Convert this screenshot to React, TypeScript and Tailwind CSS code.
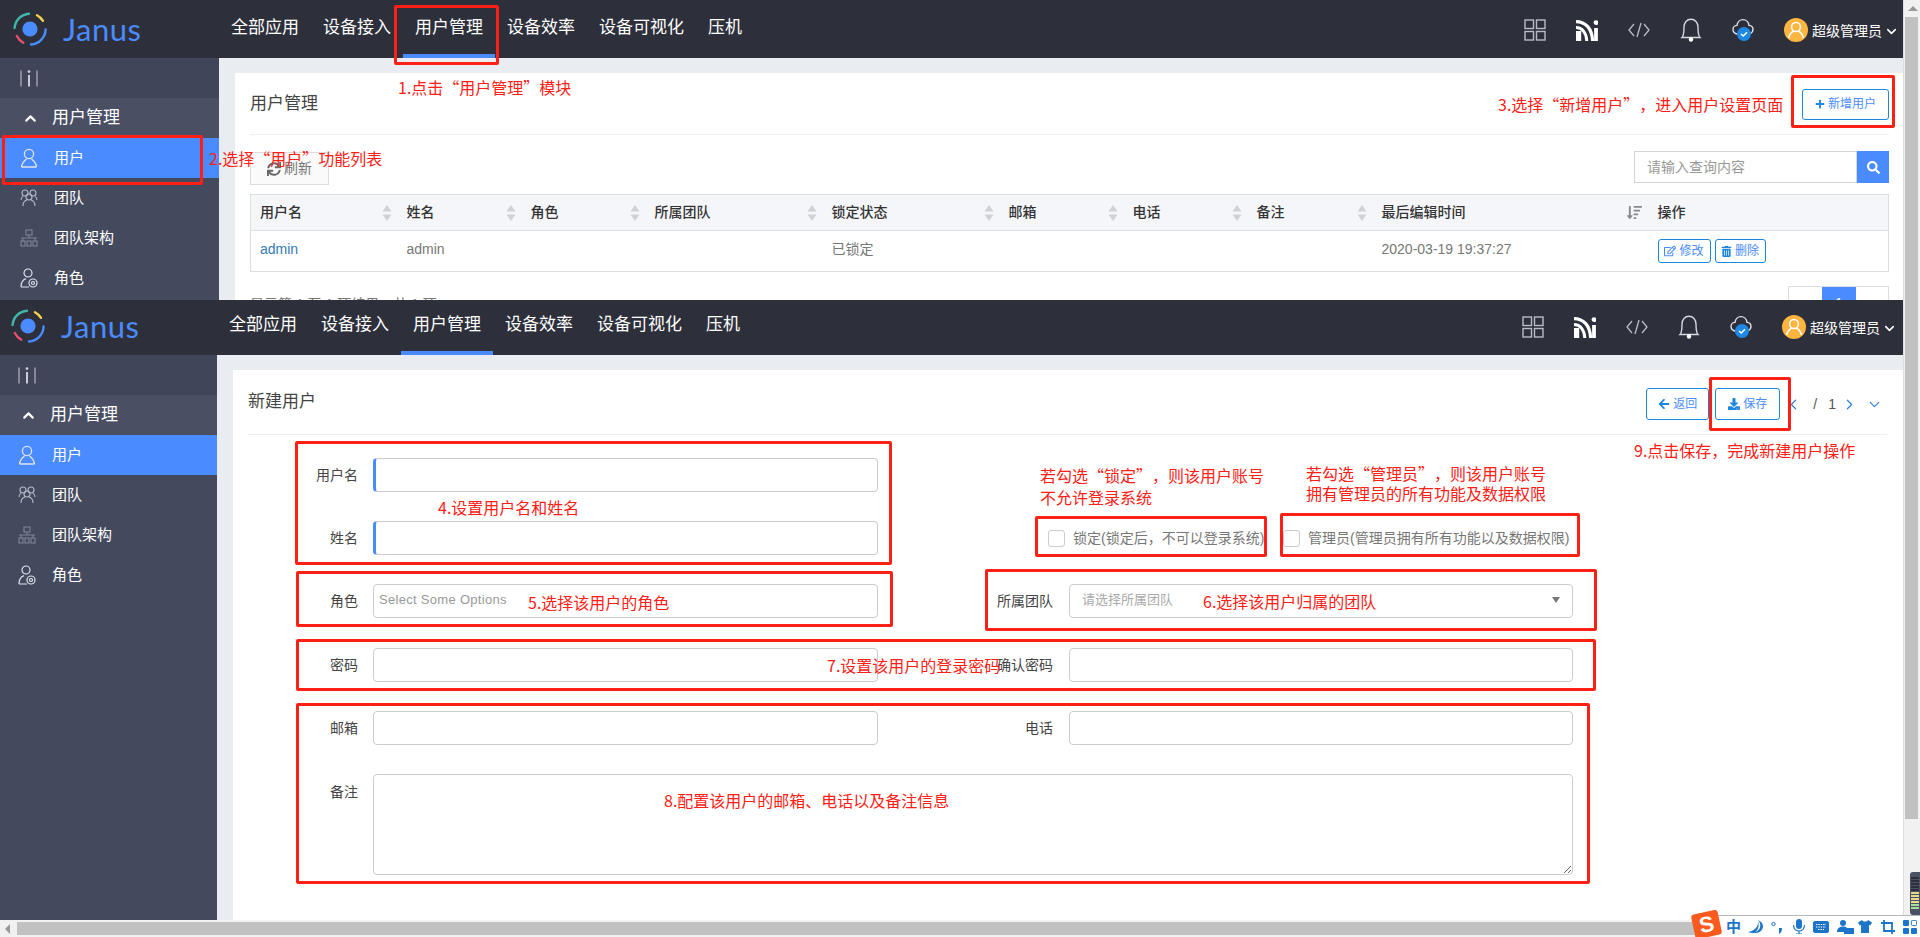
import { ChevronDown, ChevronLeft, ChevronRight, ChevronUp } from "lucide-react"
import { FaArrowLeft, FaDownload, FaPlus, FaRegEdit, FaSearch, FaSortAmountDown, FaSync, FaTrashAlt } from "react-icons/fa"

const navItems = ["全部应用", "设备接入", "用户管理", "设备效率", "设备可视化", "压机"]

function Logo() {
  return (
    <svg viewBox="0 0 36 36" className="w-[36px] h-[36px] ml-[12px] shrink-0" fill="none" strokeWidth="2.4" strokeLinecap="round">
      <circle cx="18" cy="18" r="7.6" fill="#4a8cff" />
      <path d="M2.6 17 A15.4 15.4 0 0 1 17 2.7" stroke="#3fb8a9" />
      <path d="M25 4.2 A15.5 15.5 0 0 1 31 9.8" stroke="#f5d34a" />
      <path d="M33.6 18.5 A15.6 15.6 0 0 1 19 33.5" stroke="#4a8cff" />
      <path d="M4.8 25 A15.5 15.5 0 0 0 11.3 31.7" stroke="#e8506e" />
    </svg>
  )
}

function TopNav({ wide }: { wide?: boolean }) {
  return (
    <header className={`flex h-[58px] shrink-0 bg-[#2d2f3b] text-white ${wide ? "w-[1905px] pr-[6px]" : "w-full pr-[4px]"}`}>
      <div className="flex w-[219px] shrink-0 items-center">
        <Logo />
        <span className="ml-[15px] text-[31px] leading-none text-[#4a8cff] font-['Lato','Liberation_Sans',sans-serif] tracking-[0.5px]">Janus</span>
      </div>
      <nav className="flex">
        {navItems.map((item) => (
          <a
            key={item}
            className={`flex items-center px-[12px] pb-[3px] text-[17px] ${item === "用户管理" ? "box-content border-b-4 border-[#4a8cff] pt-[4px]" : ""}`}
          >
            {item}
          </a>
        ))}
      </nav>
      <div className="ml-auto flex items-center pt-[1px]">
        <div className="flex items-center gap-[30px]">
          <svg viewBox="0 0 22 22" className="w-[22px] h-[22px]" fill="none" stroke="#b9bcc6" strokeWidth="1.4">
            <rect x="1" y="1" width="8.5" height="8.5" />
            <rect x="12.5" y="1" width="8.5" height="8.5" />
            <rect x="1" y="12.5" width="8.5" height="8.5" />
            <rect x="12.5" y="12.5" width="8.5" height="8.5" />
          </svg>
          <svg viewBox="0 0 22 22" className="w-[22px] h-[22px]" fill="none" stroke="#fff">
            <path d="M0 2.6 C9.6 2.6 16.2 9.6 16.6 22" strokeWidth="3.2" />
            <path d="M0 8.6 C6 8.6 10.4 13.6 10.8 22" strokeWidth="3" />
            <path d="M2.6 12 V22" strokeWidth="5.2" />
            <path d="M20 9 V22" strokeWidth="3.8" />
            <circle cx="20" cy="3.6" r="2.4" fill="#fff" stroke="none" />
          </svg>
          <svg viewBox="0 0 22 16" className="w-[22px] h-[16px]" fill="none" stroke="#b9bcc6" strokeWidth="1.3">
            <path d="M6 2 L1 8 L6 14" />
            <path d="M16 2 L21 8 L16 14" />
            <path d="M13 1 L9 15" />
          </svg>
          <svg viewBox="0 0 22 24" className="w-[22px] h-[24px]" fill="none" stroke="#d6d8de" strokeWidth="1.4">
            <path d="M2 19.5 C3.5 18 4 16 4 9 C4 4.6 7 1.2 11 1.2 C15 1.2 18 4.6 18 9 C18 16 18.5 18 20 19.5 Z" />
            <circle cx="11" cy="21.5" r="2.2" fill="#fff" stroke="none" />
          </svg>
          <svg viewBox="0 0 22 24" className="w-[22px] h-[24px]" fill="none">
            <path d="M6 16 C3 16 1 14 1 11.5 C1 9 3 7.4 5 7.4 C5.4 4 8 1.6 11 1.6 C14 1.6 16.6 4 17 7.4 C19.4 7.6 21 9.4 21 11.5 C21 13.4 20 14.8 18 15.6" stroke="#dfe1e6" strokeWidth="1.4" />
            <circle cx="12" cy="16" r="7" fill="#1e88e5" />
            <path d="M9 16 L11.2 18 L15 14.2" stroke="#fff" strokeWidth="1.5" />
          </svg>
        </div>
        <svg viewBox="0 0 24 24" className="ml-[30px] w-[24px] h-[24px]" fill="none" stroke="#fff" strokeWidth="1.5">
          <circle cx="12" cy="12" r="12" fill="#fdb53f" stroke="none" />
          <circle cx="12" cy="9" r="4.4" />
          <path d="M4.6 20 C5.4 16 8 14 9.6 13 M19.4 20 C18.6 16 16 14 14.4 13" />
        </svg>
        <span className="ml-[4px] pt-[4px] text-[14px]">超级管理员</span>
        <ChevronDown className="ml-[2px] mt-[4px] w-[15px] h-[15px]" strokeWidth={2.5} />
      </div>
    </header>
  )
}

function SideIcon({ name }: { name: string }) {
  if (name === "用户") {
    return (
      <svg viewBox="0 0 18 20" className="w-[18px] h-[20px]" fill="none" stroke="#dfe3ee" strokeWidth="1.3">
        <circle cx="9" cy="6" r="4.6" />
        <path d="M1.5 19 C2 14.5 4.6 12.4 6.5 11 M16.5 19 C16 14.5 13.4 12.4 11.5 11 M1.5 19 H16.5" />
      </svg>
    )
  }
  if (name === "团队") {
    return (
      <svg viewBox="0 0 18 18" className="w-[18px] h-[18px]" fill="none" stroke="#b5bac9" strokeWidth="1.1">
        <circle cx="5" cy="4" r="3" />
        <circle cx="13" cy="4" r="3" />
        <circle cx="9" cy="8" r="3" />
        <path d="M3 17 C3 13 5 11.5 7 11 M15 17 C15 13 13 11.5 11 11 M1 11 C1 9 2 8 3 7.4 M17 11 C17 9 16 8 15 7.4" />
      </svg>
    )
  }
  if (name === "团队架构") {
    return (
      <svg viewBox="0 0 18 18" className="w-[18px] h-[18px]" fill="none" stroke="#7f8496" strokeWidth="1.1">
        <rect x="6" y="1" width="6" height="5" />
        <rect x="1" y="12" width="4" height="5" />
        <rect x="7" y="12" width="4" height="5" />
        <rect x="13" y="12" width="4" height="5" />
        <path d="M9 6 V9 M1 9 H17 M3 9 V12 M15 9 V12" />
      </svg>
    )
  }
  return (
    <svg viewBox="0 0 18 20" className="w-[18px] h-[20px]" fill="none" stroke="#dfe3ee" strokeWidth="1.2">
      <circle cx="8" cy="5" r="4" />
      <path d="M1 19 C1 14 3 11.6 6 10.6 M1 19 H9" />
      <circle cx="13" cy="15" r="4" />
      <circle cx="13" cy="15" r="1.5" />
    </svg>
  )
}

function Sidebar() {
  return (
    <aside className="w-[219px] shrink-0 bg-[#444a5e] text-white text-[15px]">
      <div className="flex h-[40px] items-center pl-[20px] bg-[#40455a]">
        <svg viewBox="0 0 18 17" className="w-[18px] h-[17px]" fill="none" stroke="#c8cbd6" strokeWidth="1">
          <path d="M1 0.5 V16.5 M17 0.5 V16.5" />
          <path d="M9 5 V16.5" strokeWidth="2" />
          <circle cx="9" cy="1.6" r="1.4" fill="#c8cbd6" stroke="none" />
        </svg>
      </div>
      <div className="flex h-[40px] items-center pl-[22px] bg-[#4a4f64] text-[17px]">
        <ChevronUp className="w-[17px] h-[17px]" strokeWidth={3} />
        <span className="ml-[13px]">用户管理</span>
      </div>
      {["用户", "团队", "团队架构", "角色"].map((name) => (
        <div key={name} className={`flex h-[40px] items-center pl-[20px] ${name === "用户" ? "bg-[#4a8cff]" : ""}`}>
          <span className="flex w-[18px] justify-center">
            <SideIcon name={name} />
          </span>
          <span className="ml-[16px]">{name}</span>
        </div>
      ))}
    </aside>
  )
}

function SortIcon() {
  return (
    <svg viewBox="0 0 10 16" className="absolute right-[6px] top-[10px] w-[10px] h-[16px]" fill="#cfd1d6">
      <path d="M5 0 L9.5 6.5 H0.5 Z" />
      <path d="M5 16 L9.5 9.5 H0.5 Z" />
    </svg>
  )
}

const columns = ["用户名", "姓名", "角色", "所属团队", "锁定状态", "邮箱", "电话", "备注"]

function UserList() {
  return (
    <div className="h-[400px] bg-white pl-[15px] pr-[14px]">
      <div className="flex h-[62px] items-center justify-between border-b border-[#eceef2] pt-[1px]">
        <h2 className="text-[17px] text-[#444]">用户管理</h2>
        <button className="flex h-[31px] w-[87px] items-center justify-center gap-[3px] rounded-[3px] border border-[#1c86e0] text-[12px] text-[#4a8cff]">
          <FaPlus className="w-[10px] h-[10px] text-[#1c86e0]" />
          新增用户
        </button>
      </div>
      <div className="mt-[16px] flex items-start justify-between">
        <button className="mt-[1px] flex h-[33px] w-[79px] items-center justify-center gap-[3px] border border-[#ddd] bg-[#fafafa] text-[14px] text-[#777]">
          <FaSync className="w-[14px] h-[14px] text-[#666]" />
          刷新
        </button>
        <div className="flex h-[32px] w-[255px]">
          <input readOnly placeholder="请输入查询内容" className="min-w-0 flex-1 border border-[#d4d4d4] pl-[12px] text-[14px] placeholder:text-[#999]" />
          <span className="flex w-[32px] items-center justify-center bg-[#4a8cff] text-white">
            <FaSearch className="w-[13px] h-[13px]" />
          </span>
        </div>
      </div>
      <table className="mt-[9px] w-full table-fixed border border-[#dcdee3] text-[14px]">
        <colgroup>
          <col className="w-[147px]" />
          <col className="w-[124px]" />
          <col className="w-[124px]" />
          <col className="w-[177px]" />
          <col className="w-[177px]" />
          <col className="w-[124px]" />
          <col className="w-[124px]" />
          <col className="w-[125px]" />
          <col className="w-[276px]" />
          <col />
        </colgroup>
        <thead>
          <tr className="h-[36px] bg-[#f5f6fa] text-left text-[#333]">
            {columns.map((col) => (
              <th key={col} className="relative pl-[9px] font-medium">
                {col}
                <SortIcon />
              </th>
            ))}
            <th className="relative pl-[9px] font-medium">
              最后编辑时间
              <FaSortAmountDown className="absolute right-[7px] top-[10px] w-[15px] h-[15px] text-[#888]" />
            </th>
            <th className="pl-[9px] font-medium">操作</th>
          </tr>
        </thead>
        <tbody className="text-[#777]">
          <tr className="h-[41px] border-t border-[#dcdee3]">
            <td className="pl-[9px] pb-[3px] text-[#337ab7]">admin</td>
            <td className="pl-[9px] pb-[3px]">admin</td>
            <td />
            <td />
            <td className="pl-[9px] pb-[3px]">已锁定</td>
            <td />
            <td />
            <td />
            <td className="pl-[9px] pb-[3px]">2020-03-19 19:37:27</td>
            <td className="pl-[9px]">
              <div className="flex gap-[4px]">
                <button className="flex h-[24px] w-[53px] items-center justify-center gap-[3px] rounded-[3px] border border-[#1c86e0] text-[12px] text-[#4a8cff]">
                  <FaRegEdit className="w-[12px] h-[12px]" />
                  修改
                </button>
                <button className="flex h-[24px] w-[51px] items-center justify-center gap-[3px] rounded-[3px] border border-[#1c86e0] text-[12px] text-[#4a8cff]">
                  <FaTrashAlt className="w-[11px] h-[11px] text-[#1c86e0]" />
                  删除
                </button>
              </div>
            </td>
          </tr>
        </tbody>
      </table>
      <div className="mt-[14px] flex items-start justify-between text-[14px] text-[#777]">
        <span className="pt-[8px]">显示第 1 至 1 项结果，共 1 项</span>
        <div className="flex h-[34px] border border-[#ddd]">
          <span className="flex w-[33px] items-center justify-center text-[#999]">‹</span>
          <span className="flex w-[34px] items-center justify-center bg-[#4a8cff] text-white">1</span>
          <span className="flex w-[32px] items-center justify-center text-[#999]">›</span>
        </div>
      </div>
    </div>
  )
}

const inputClass = "h-[34px] rounded-[4px] border border-[#ccc] bg-white"

function Label({ children, wide }: { children: string; wide?: boolean }) {
  return (
    <label className={`shrink-0 text-right text-[14px] text-[#444] ${wide ? "w-[175px] mr-[16px]" : "w-[110px] mr-[15px]"}`}>
      {children}
    </label>
  )
}

function UserForm() {
  return (
    <div className="h-full bg-white pl-[15px] pr-[16px]">
      <div className="flex h-[65px] items-start justify-between border-b border-[#eceef2]">
        <h2 className="pt-[20px] text-[17px] leading-[24px] text-[#444]">新建用户</h2>
        <div className="flex items-center pt-[18px] pr-[4px]">
          <button className="flex h-[32px] w-[63px] items-center justify-center gap-[3px] rounded-[3px] border border-[#1c86e0] text-[12px] text-[#4a8cff]">
            <FaArrowLeft className="w-[12px] h-[12px] text-[#1c86e0]" />
            返回
          </button>
          <button className="ml-[6px] flex h-[32px] w-[65px] items-center justify-center gap-[3px] rounded-[3px] border border-[#1c86e0] text-[12px] text-[#4a8cff]">
            <FaDownload className="w-[12px] h-[12px] text-[#1c86e0]" />
            保存
          </button>
          <ChevronLeft className="ml-[5px] w-[17px] h-[17px] text-[#2f80d8]" strokeWidth={1.7} />
          <span className="ml-[11px] text-[14px] text-[#555]">/</span>
          <span className="ml-[11px] text-[14px] text-[#555]">1</span>
          <ChevronRight className="ml-[5px] w-[17px] h-[17px] text-[#2f80d8]" strokeWidth={1.7} />
          <ChevronDown className="ml-[8px] w-[17px] h-[17px] text-[#2f80d8]" strokeWidth={1.7} />
        </div>
      </div>

      <div className="mt-[23px] flex items-center">
        <Label>用户名</Label>
        <input readOnly className={`${inputClass} w-[505px] border-l-[3px] border-l-[#4a8cff]`} />
      </div>

      <div className="mt-[29px] flex items-center">
        <Label>姓名</Label>
        <input readOnly className={`${inputClass} w-[505px] border-l-[3px] border-l-[#4a8cff]`} />
        <div className="ml-[170px] flex w-[235px] items-center gap-[8px] text-[14px] text-[#777]">
          <span className="h-[17px] w-[17px] shrink-0 rounded-[3px] border border-[#ccc]" />
          <span className="whitespace-nowrap">锁定(锁定后，不可以登录系统)</span>
        </div>
        <div className="flex items-center gap-[8px] text-[14px] text-[#777]">
          <span className="h-[17px] w-[17px] shrink-0 rounded-[3px] border border-[#ccc]" />
          <span className="whitespace-nowrap">管理员(管理员拥有所有功能以及数据权限)</span>
        </div>
      </div>

      <div className="mt-[29px] flex items-center">
        <Label>角色</Label>
        <div className={`${inputClass} w-[505px] pl-[5px] text-[13px] leading-[30px] text-[#999] tracking-[0.3px]`}>Select Some Options</div>
        <Label wide>所属团队</Label>
        <div className={`${inputClass} flex w-[504px] items-center justify-between px-[12px] pb-[2px] text-[13px] text-[#aaa]`}>
          请选择所属团队
          <span className="h-0 w-0 border-x-[4px] border-t-[6px] border-x-transparent border-t-[#777]" />
        </div>
      </div>

      <div className="mt-[30px] flex items-center">
        <Label>密码</Label>
        <input readOnly className={`${inputClass} w-[505px]`} />
        <Label wide>确认密码</Label>
        <input readOnly className={`${inputClass} w-[504px]`} />
      </div>

      <div className="mt-[29px] flex items-center">
        <Label>邮箱</Label>
        <input readOnly className={`${inputClass} w-[505px]`} />
        <Label wide>电话</Label>
        <input readOnly className={`${inputClass} w-[504px]`} />
      </div>

      <div className="mt-[29px] flex items-start">
        <div className="flex shrink-0 pt-[8px]">
          <Label>备注</Label>
        </div>
        <textarea readOnly className="h-[101px] w-[1200px] shrink-0 rounded-[4px] border border-[#ccc]" />
      </div>
    </div>
  )
}

function Annotations() {
  const note = "absolute whitespace-nowrap font-['Noto_Sans_CJK_SC',sans-serif] text-[16px] leading-[22px] text-[#fe2015] [text-spacing-trim:space-all]"
  const box = "absolute rounded-[2px] border-[3px] border-[#fe2015]"
  return (
    <>
      <div className={`${box} left-[394px] top-[5px] w-[105px] h-[60px]`} />
      <div className={`${box} left-[2px] top-[135px] w-[201px] h-[50px]`} />
      <div className={`${box} left-[1791px] top-[75px] w-[104px] h-[53px]`} />
      <div className={`${box} left-[1709px] top-[377px] w-[82px] h-[54px]`} />
      <div className={`${box} left-[295px] top-[441px] w-[597px] h-[124px]`} />
      <div className={`${box} left-[296px] top-[571px] w-[597px] h-[56px]`} />
      <div className={`${box} left-[1035px] top-[516px] w-[232px] h-[41px]`} />
      <div className={`${box} left-[1280px] top-[513px] w-[300px] h-[44px]`} />
      <div className={`${box} left-[985px] top-[569px] w-[612px] h-[62px]`} />
      <div className={`${box} left-[296px] top-[639px] w-[1300px] h-[52px]`} />
      <div className={`${box} left-[296px] top-[703px] w-[1294px] h-[181px]`} />

      <span className={`${note} left-[398px] top-[76px]`}>1.点击“用户管理”模块</span>
      <span className={`${note} left-[209px] top-[147px]`}>2.选择“用户”功能列表</span>
      <span className={`${note} left-[1498px] top-[93px]`}>3.选择“新增用户”，进入用户设置页面</span>
      <span className={`${note} left-[438px] top-[496px]`}>4.设置用户名和姓名</span>
      <span className={`${note} left-[528px] top-[591px]`}>5.选择该用户的角色</span>
      <span className={`${note} left-[1203px] top-[590px]`}>6.选择该用户归属的团队</span>
      <span className={`${note} left-[827px] top-[654px]`}>7.设置该用户的登录密码</span>
      <span className={`${note} left-[664px] top-[789px]`}>8.配置该用户的邮箱、电话以及备注信息</span>
      <span className={`${note} left-[1634px] top-[439px]`}>9.点击保存，完成新建用户操作</span>
      <span className={`${note} left-[1040px] top-[464px]`}>若勾选“锁定”，则该用户账号</span>
      <span className={`${note} left-[1040px] top-[486px]`}>不允许登录系统</span>
      <span className={`${note} left-[1306px] top-[462px]`}>若勾选“管理员”，则该用户账号</span>
      <span className={`${note} left-[1306px] top-[482px]`}>拥有管理员的所有功能及数据权限</span>
    </>
  )
}

function SogouBar() {
  return (
    <div className="absolute bottom-0 right-0 flex h-[22px] w-[205px] items-center border-t border-[#b5b8bd] bg-white text-[#1c75c8]">
      <span className="absolute left-[-22px] top-[-4px] flex h-[25px] w-[27px] -rotate-12 items-center justify-center rounded-[3px] bg-[#fa5a1e] text-[22px] font-bold leading-none text-white">
        S
      </span>
      <span className="ml-[11px] w-[15px] text-[15px] font-bold leading-none">中</span>
      <svg viewBox="0 0 15 14" className="ml-[7px] w-[15px] h-[14px]" fill="#1c75c8">
        <path d="M10 0 C14 4 14 14 0 12 C5 14 15 14 15 6 C15 3 12 1 10 0 Z M10 0 C11 6 7 11 0 12 C4 14 13 13 10 0 Z" />
      </svg>
      <svg viewBox="0 0 12 14" className="ml-[8px] w-[12px] h-[14px]" fill="#1c75c8">
        <circle cx="2.5" cy="4" r="1.7" fill="none" stroke="#1c75c8" />
        <path d="M8 8 H11 C11 11 10 13 8 14 L8 11 Z" />
      </svg>
      <svg viewBox="0 0 12 15" className="ml-[10px] w-[12px] h-[15px]" fill="#1c75c8">
        <rect x="3" y="0" width="6" height="10" rx="3" />
        <path d="M0.6 6 C0.6 14 11.4 14 11.4 6 M6 12 V15 M3 15 H9" fill="none" stroke="#1c75c8" strokeWidth="1.2" />
      </svg>
      <svg viewBox="0 0 16 12" className="ml-[8px] w-[16px] h-[12px]" fill="none" stroke="#1c75c8">
        <rect x="0.5" y="0.5" width="15" height="11" rx="1.5" fill="#1c75c8" />
        <path d="M3 3.5 H13 M3 6 H13 M5 8.5 H11" stroke="#fff" strokeDasharray="1.4 1" />
      </svg>
      <svg viewBox="0 0 17 14" className="ml-[8px] w-[17px] h-[14px]" fill="#1c75c8">
        <circle cx="6" cy="3" r="3" />
        <path d="M0 12 C0 8 3 6.6 6 6.6 C8 6.6 9 7 10 8 V12 Z" />
        <rect x="7" y="8" width="10" height="6" fill="#1c75c8" />
      </svg>
      <svg viewBox="0 0 14 13" className="ml-[4px] w-[14px] h-[13px]" fill="#1c75c8">
        <path d="M4 0 C5 2 9 2 10 0 L14 2.4 L12.4 5.4 L11 4.8 V13 H3 V4.8 L1.6 5.4 L0 2.4 Z" />
      </svg>
      <svg viewBox="0 0 14 14" className="ml-[9px] w-[14px] h-[14px]" fill="none" stroke="#1c75c8" strokeWidth="1.8">
        <path d="M3 0 V11 H14 M0 3 H11 V14" />
      </svg>
      <svg viewBox="0 0 14 14" className="ml-[8px] w-[14px] h-[14px]" fill="#1c75c8">
        <rect x="0" y="0" width="6" height="6" rx="1" />
        <rect x="8.4" y="0.4" width="5.2" height="5.2" rx="1" fill="none" stroke="#1c75c8" />
        <rect x="0" y="8" width="6" height="6" rx="1" />
        <rect x="8" y="8" width="6" height="6" rx="1" />
      </svg>
    </div>
  )
}

export default function App() {
  return (
    <div className="relative flex h-screen w-screen overflow-hidden bg-white font-['Liberation_Sans','Noto_Sans_CJK_SC',sans-serif]">
      <div className="flex min-w-0 flex-1 flex-col">
        {/* first window, cut off at the pagination */}
        <section className="flex h-[300px] shrink-0 flex-col overflow-hidden">
          <TopNav />
          <div className="flex flex-1">
            <Sidebar />
            <main className="flex-1 bg-[#e9ecf1] pl-[16px] pt-[15px]">
              <UserList />
            </main>
          </div>
        </section>

        {/* second window, same shell sitting 2px left and 3px higher */}
        <section className="h-[620px] shrink-0 overflow-hidden">
          <div className="ml-[-2px] mt-[-3px] flex h-[623px] flex-col">
            <TopNav wide />
            <div className="flex flex-1">
              <Sidebar />
              <main className="flex-1 bg-[#e9ecf1] pl-[16px] pt-[15px]">
                <UserForm />
              </main>
            </div>
          </div>
        </section>

        {/* horizontal scrollbar */}
        <div className="flex h-[17px] shrink-0 items-center bg-[#f1f1f1]">
          <span className="ml-[5px] h-0 w-0 border-y-[5px] border-r-[5px] border-y-transparent border-r-[#999]" />
          <span className="ml-[7px] h-[13px] w-[1680px] bg-[#c1c1c1]" />
        </div>
      </div>

      {/* vertical scrollbar */}
      <div className="relative w-[17px] shrink-0 border-l border-[#dedede] bg-[#f1f1f1]">
        <span className="absolute left-[4px] top-[6px] h-0 w-0 border-x-[5px] border-b-[5px] border-x-transparent border-b-[#999]" />
        <span className="absolute left-[1px] right-[2px] top-[17px] h-[802px] bg-[#c1c1c1]" />
        <div className="absolute bottom-[22px] right-0 flex h-[43px] w-[10px] flex-col gap-[1px] rounded-l-[3px] bg-[#4b5263] pl-[1px] pt-[5px]">
          <span className="h-[2px] w-[8px] bg-[#2d2f3b]" />
          <span className="h-[2px] w-[8px] bg-[#2d2f3b]" />
          <span className="h-[2px] w-[8px] bg-[#2d2f3b]" />
          <span className="h-[2px] w-[8px] bg-[#2d2f3b]" />
          <span className="h-[2px] w-[8px] bg-[#2d2f3b]" />
          <span className="h-[2px] w-[8px] bg-[#e5d98a]" />
          <span className="h-[2px] w-[8px] bg-[#e5d98a]" />
          <span className="h-[2px] w-[8px] bg-[#e5d98a]" />
          <span className="h-[2px] w-[8px] bg-[#e5d98a]" />
          <span className="h-[2px] w-[8px] bg-[#a8dc9a]" />
          <span className="h-[2px] w-[8px] bg-[#a8dc9a]" />
        </div>
      </div>

      <Annotations />
      <SogouBar />
    </div>
  )
}
